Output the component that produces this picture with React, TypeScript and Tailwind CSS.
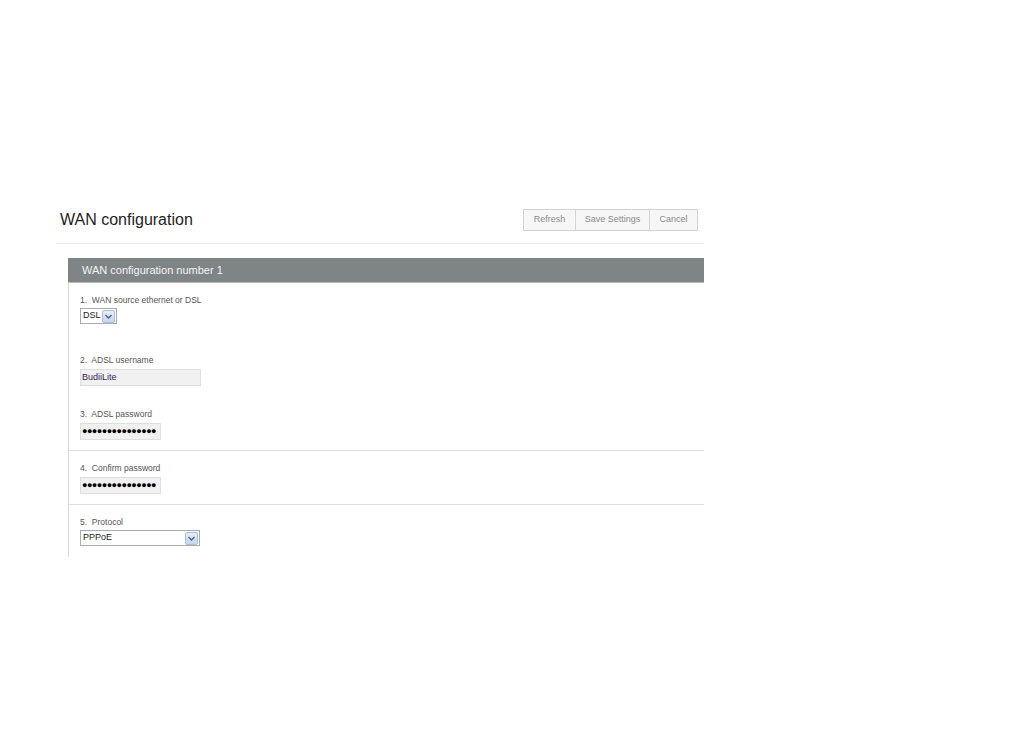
import React from "react";

function Chevron() {
  return (
    <span className="flex h-[13px] w-[13px] items-center justify-center rounded-[2px] border border-[#a9bfd8] bg-gradient-to-b from-[#e8eef8] to-[#c5d5ec]">
      <svg width="7" height="5" viewBox="0 0 7 5">
        <path d="M0.5 1 L3.5 4 L6.5 1" fill="none" stroke="#4d6185" strokeWidth="1.4" />
      </svg>
    </span>
  );
}

function Select({ value, width }: { value: string; width: string }) {
  return (
    <div
      className={`flex h-[16px] items-center justify-between border border-[#a5acb5] bg-white pl-[2px] pr-[1px] text-[9px] text-[#222] ${width}`}
    >
      <span>{value}</span>
      <Chevron />
    </div>
  );
}

function TextBox({ value, width, dots }: { value: string; width: string; dots?: boolean }) {
  return (
    <div
      className={`flex h-[17px] items-center border border-[#dedede] bg-[#f1f1f1] px-[1px] text-[9px] ${width} ${
        dots ? "tracking-[-0.5px] text-black" : "text-[#3a1a5a]"
      }`}
    >
      {value}
    </div>
  );
}

export default function App() {
  const pw = "●●●●●●●●●●●●●●●";
  return (
    <div
      className="min-h-[737px] w-[1020px] bg-white"
      style={{ fontFamily: '"Liberation Sans", Arial, sans-serif' }}
    >
      <div className="ml-[56px] w-[648px] pt-[208px]">
        <div className="flex items-start justify-between border-b border-[#ececec] pb-[12px] pl-[4px] pr-[6px]">
          <h1 className="pt-[2px] text-[16px] leading-[20px] text-[#1e1e1e]">WAN configuration</h1>
          <div className="mt-[1px] flex h-[22px] border border-[#d4d4d4] bg-[#f7f7f7] text-[9px] text-[#8a8a8a]">
            <span className="flex w-[52px] items-center justify-center border-r border-[#d4d4d4]">Refresh</span>
            <span className="flex w-[74px] items-center justify-center border-r border-[#d4d4d4]">Save Settings</span>
            <span className="flex w-[47px] items-center justify-center">Cancel</span>
          </div>
        </div>

        <div className="ml-[12px] mt-[14px]">
          <div className="flex h-[25px] items-center border-b border-[#b9bcbe] bg-[#7f8487] pl-[14px] text-[11px] text-[#f4f4f4]">
            WAN configuration number 1
          </div>
          <div className="border-l border-[#d8d8d8] pb-[11px]">
            <div className="pl-[11px] pt-[12px]">
              <div className="text-[8.5px] leading-[10px] text-[#555]">1.&nbsp; WAN source ethernet or DSL</div>
              <div className="mt-[3px]">
                <Select value="DSL" width="w-[37px]" />
              </div>
            </div>
            <div className="pl-[11px] pt-[31px]">
              <div className="text-[8.5px] leading-[10px] text-[#555]">2.&nbsp; ADSL username</div>
              <div className="mt-[4px]">
                <TextBox value="BudiiLite" width="w-[121px]" />
              </div>
            </div>
            <div className="border-b border-[#dedede] pb-[10px] pl-[11px] pt-[23px]">
              <div className="text-[8.5px] leading-[10px] text-[#555]">3.&nbsp; ADSL password</div>
              <div className="mt-[4px]">
                <TextBox value={pw} width="w-[81px]" dots />
              </div>
            </div>
            <div className="border-b border-[#dedede] pb-[10px] pl-[11px] pt-[12px]">
              <div className="text-[8.5px] leading-[10px] text-[#555]">4.&nbsp; Confirm password</div>
              <div className="mt-[4px]">
                <TextBox value={pw} width="w-[81px]" dots />
              </div>
            </div>
            <div className="pl-[11px] pt-[12px]">
              <div className="text-[8.5px] leading-[10px] text-[#555]">5.&nbsp; Protocol</div>
              <div className="mt-[3px]">
                <Select value="PPPoE" width="w-[120px]" />
              </div>
            </div>
          </div>
        </div>
      </div>
    </div>
  );
}
